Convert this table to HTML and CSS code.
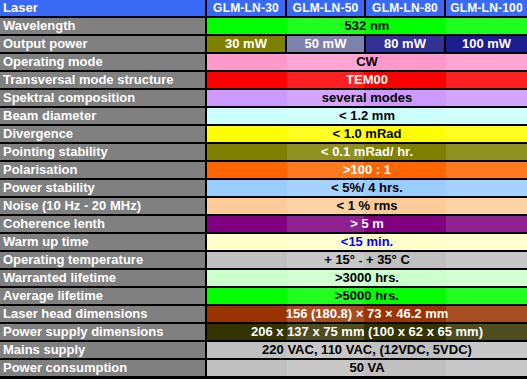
FILE: index.html
```html
<!DOCTYPE html>
<html>
<head>
<meta charset="utf-8">
<link rel="stylesheet" href="styles.css">
</head>
<body>
<div class="spec">
  <div class="hd lbl">Laser</div>
  <div class="hd model">GLM-LN-30</div>
  <div class="hd model">GLM-LN-50</div>
  <div class="hd model">GLM-LN-80</div>
  <div class="hd model">GLM-LN-100</div>

  <div class="lbl">Wavelength</div>
  <div class="span c-green">532 nm</div>

  <div class="lbl">Output power</div>
  <div class="val p30">30 mW</div>
  <div class="val p50">50 mW</div>
  <div class="val p80">80 mW</div>
  <div class="val p100">100 mW</div>

  <div class="lbl">Operating mode</div>
  <div class="span c-pink">CW</div>

  <div class="lbl">Transversal mode structure</div>
  <div class="span c-red">TEM00</div>

  <div class="lbl">Spektral composition</div>
  <div class="span c-lilac">several modes</div>

  <div class="lbl">Beam diameter</div>
  <div class="span c-cyan">&lt; 1.2 mm</div>

  <div class="lbl">Divergence</div>
  <div class="span c-yellow">&lt; 1.0 mRad</div>

  <div class="lbl">Pointing stability</div>
  <div class="span c-olive">&lt; 0.1 mRad/ hr.</div>

  <div class="lbl">Polarisation</div>
  <div class="span c-orange">&gt;100 : 1</div>

  <div class="lbl">Power stability</div>
  <div class="span c-sky">&lt; 5%/ 4 hrs.</div>

  <div class="lbl">Noise (10 Hz - 20 MHz)</div>
  <div class="span c-peach">&lt; 1 % rms</div>

  <div class="lbl">Coherence lenth</div>
  <div class="span c-purple">&gt; 5 m</div>

  <div class="lbl">Warm up time</div>
  <div class="span c-cream">&lt;15 min.</div>

  <div class="lbl">Operating temperature</div>
  <div class="span c-silver">+ 15° <span class="dash">-</span> + 35° C</div>

  <div class="lbl">Warranted lifetime</div>
  <div class="span c-mint">&gt;3000 hrs.</div>

  <div class="lbl">Average lifetime</div>
  <div class="span c-green">&gt;5000 hrs.</div>

  <div class="lbl">Laser head dimensions</div>
  <div class="span c-brown">156 (180.8) × 73 × 46.2 mm</div>

  <div class="lbl">Power supply dimensions</div>
  <div class="span c-dark">206 x 137 x 75 mm (100 x 62 x 65 mm)</div>

  <div class="lbl">Mains supply</div>
  <div class="span c-silver">220 VAC, 110 VAC, (12VDC, 5VDC)</div>

  <div class="lbl">Power consumption</div>
  <div class="span c-silver">50 VA</div>
</div>
</body>
</html>
```

FILE: styles.css
```css
html, body {
  margin: 0;
  padding: 0;
  background: #000;
}

.spec {
  display: grid;
  grid-template-columns: 205px 78px 77px 78px 1fr;
  grid-auto-rows: 16px;
  gap: 2px;
  width: 527px;
  font-family: "Liberation Sans", Arial, sans-serif;
  font-weight: bold;
  font-size: 13px;
  line-height: 16px;
  white-space: nowrap;
}

.spec > div {
  text-align: center;
  overflow: hidden;
}

.hd {
  background: #3a6af5;
  color: #fff;
}

.model {
  font-size: 12px;
  letter-spacing: 0.2px;
}

.lbl {
  background: #808080;
  color: #fff;
  text-align: left !important;
  padding-left: 3px;
}

.hd.lbl {
  background: #3a6af5;
}

.val { color: #fff; }
.p30 { background: #808000; }
.p50 { background: #7e80ae; }
.p80 { background: #313196; }
.p100 { background: #1c1c8e; }

.span {
  grid-column: 2 / 6;
  background-image: linear-gradient(90deg,
    transparent 80px,
    rgba(255, 255, 255, 0.13) 80px 157px,
    transparent 157px 239px,
    rgba(255, 255, 255, 0.13) 239px);
}

.dash { font-size: 11px; }

.c-green  { background-color: #00ff00; color: #000; }
.c-pink   { background-color: #ff99cc; color: #000; }
.c-red    { background-color: #ff0000; color: #fff; }
.c-lilac  { background-color: #cc99ff; color: #000; }
.c-cyan   { background-color: #ccffff; color: #000; }
.c-yellow { background-color: #ffff00; color: #000; }
.c-olive  { background-color: #808000; color: #fff; }
.c-orange { background-color: #ff6600; color: #fff; }
.c-sky    { background-color: #99ccff; color: #000; }
.c-peach  { background-color: #ffcc99; color: #000; }
.c-purple { background-color: #800080; color: #fff; }
.c-cream  { background-color: #ffffcc; color: #0000ff; }
.c-silver { background-color: #c0c0c0; color: #000; }
.c-mint   { background-color: #ccffcc; color: #000; }
.c-brown  { background-color: #993300; color: #fff; }
.c-dark   { background-color: #333300; color: #fff; }
```
